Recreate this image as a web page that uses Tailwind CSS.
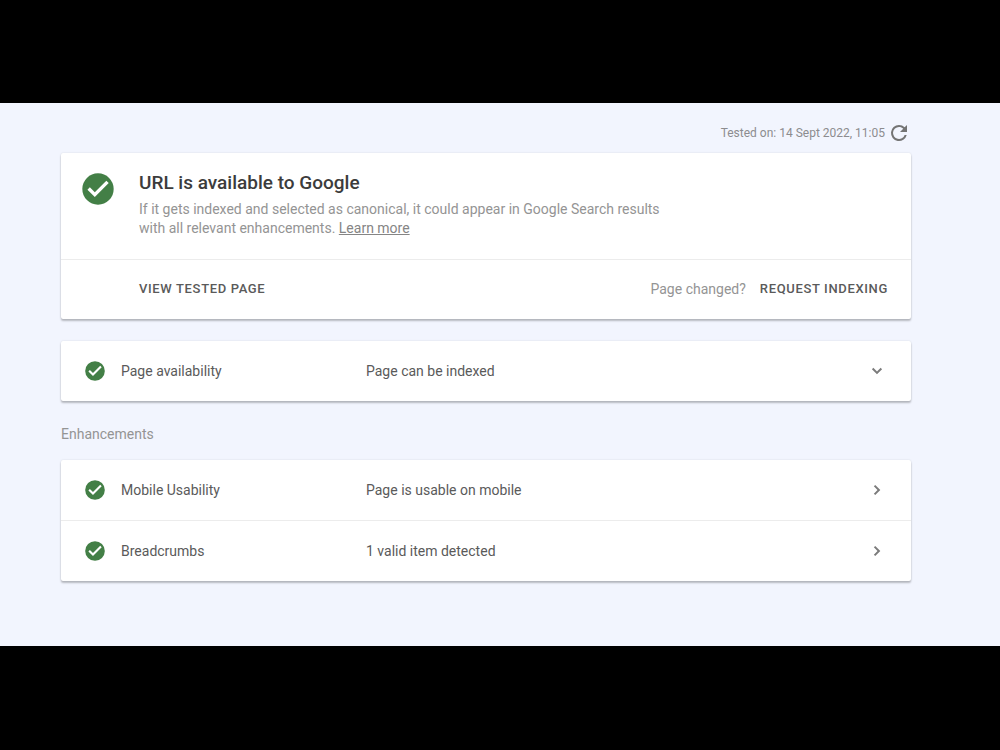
<!DOCTYPE html>
<html lang="en">
<head>
    <meta charset="UTF-8">
    <meta name="viewport" content="width=device-width, initial-scale=1.0">
    <title>URL Inspection</title>
    <script src="https://cdn.jsdelivr.net/npm/@tailwindcss/browser@4"></script>
</head>
<body class="bg-black min-h-screen py-[103px] font-['Roboto',sans-serif]">

    <!-- Shared icons -->
    <svg class="hidden" aria-hidden="true">
        <symbol id="check" viewBox="2 2 20 20">
            <circle cx="12" cy="12" r="9.8" fill="#437f46"/>
            <path d="M10 17l-4.6-4.6 1.5-1.5L10 14l7.2-7.2 1.5 1.5z" fill="#fff"/>
        </symbol>
        <symbol id="chevron" viewBox="0 0 24 24">
            <path d="M8.2 16.4L12.6 12 8.2 7.6 9.9 5.9l6.1 6.1-6.1 6.1z" fill="currentColor"/>
        </symbol>
    </svg>

    <main class="bg-[#f2f5fe] pt-5 pb-[65px] pl-[61px] pr-[89px] text-[#5a5a5a]">

        <!-- Tested on -->
        <div class="flex items-center justify-end gap-1 h-5 mb-[10px] pr-[2px] text-xs text-[#8c8c8f]">
            <span>Tested on: 14 Sept 2022, 11:05</span>
            <button type="button" aria-label="Test again" class="text-[#747474]">
                <svg class="size-5" viewBox="2 2 20 20">
                    <path fill="currentColor" d="M17.65 6.35A7.96 7.96 0 0 0 12 4a8 8 0 1 0 7.73 10h-2.08A6 6 0 1 1 12 6c1.66 0 3.14.69 4.22 1.78L13 11h7V4z"/>
                </svg>
            </button>
        </div>

        <!-- Result -->
        <section class="bg-white rounded-xs shadow-[0_2px_2px_rgba(0,0,0,0.24),0_0_2px_rgba(0,0,0,0.12)]">
            <div class="flex gap-[25px] h-[106px] pt-5 pl-[21px] pr-6">
                <svg class="size-8 shrink-0"><use href="#check"/></svg>
                <div class="max-w-[540px]">
                    <h1 class="text-[19px] leading-5 font-medium text-[#3c3c3c]">URL is available to Google</h1>
                    <p class="mt-[7px] text-sm leading-[19px] text-[#949494]">If it gets indexed and selected as canonical, it could appear in Google Search results with all relevant enhancements. <a href="#" class="underline text-[#858585]">Learn more</a></p>
                </div>
            </div>
            <div class="flex items-center justify-between h-[60px] pl-[78px] pr-[23px] pb-[2px] border-t border-[#ececec]">
                <button type="button" class="text-[13px] font-medium tracking-wider">VIEW TESTED PAGE</button>
                <div class="flex items-center gap-[14px]">
                    <span class="text-sm text-[#949494]">Page changed?</span>
                    <button type="button" class="text-[13px] font-medium tracking-wider">REQUEST INDEXING</button>
                </div>
            </div>
        </section>

        <!-- Availability -->
        <section class="mt-[22px] bg-white rounded-xs shadow-[0_2px_2px_rgba(0,0,0,0.24),0_0_2px_rgba(0,0,0,0.12)]">
            <button type="button" class="flex items-center w-full h-[60px] pl-6 pr-6 text-sm text-left">
                <svg class="size-5 mr-4"><use href="#check"/></svg>
                <span class="w-[245px]">Page availability</span>
                <span class="grow">Page can be indexed</span>
                <svg class="size-5 rotate-90 text-[#7b7b7b]"><use href="#chevron"/></svg>
            </button>
        </section>

        <!-- Enhancements -->
        <h2 class="mt-[23px] text-sm leading-5 text-[#949494]">Enhancements</h2>
        <section class="mt-4 bg-white rounded-xs divide-y divide-[#ececec] shadow-[0_2px_2px_rgba(0,0,0,0.24),0_0_2px_rgba(0,0,0,0.12)]">
            <a href="#" class="flex items-center w-full h-[61px] pl-6 pr-6 text-sm">
                <svg class="size-5 mr-4"><use href="#check"/></svg>
                <span class="w-[245px]">Mobile Usability</span>
                <span class="grow">Page is usable on mobile</span>
                <svg class="size-5 text-[#7b7b7b]"><use href="#chevron"/></svg>
            </a>
            <a href="#" class="flex items-center w-full h-[60px] pl-6 pr-6 text-sm">
                <svg class="size-5 mr-4"><use href="#check"/></svg>
                <span class="w-[245px]">Breadcrumbs</span>
                <span class="grow">1 valid item detected</span>
                <svg class="size-5 text-[#7b7b7b]"><use href="#chevron"/></svg>
            </a>
        </section>
    </main>

</body>
</html>
